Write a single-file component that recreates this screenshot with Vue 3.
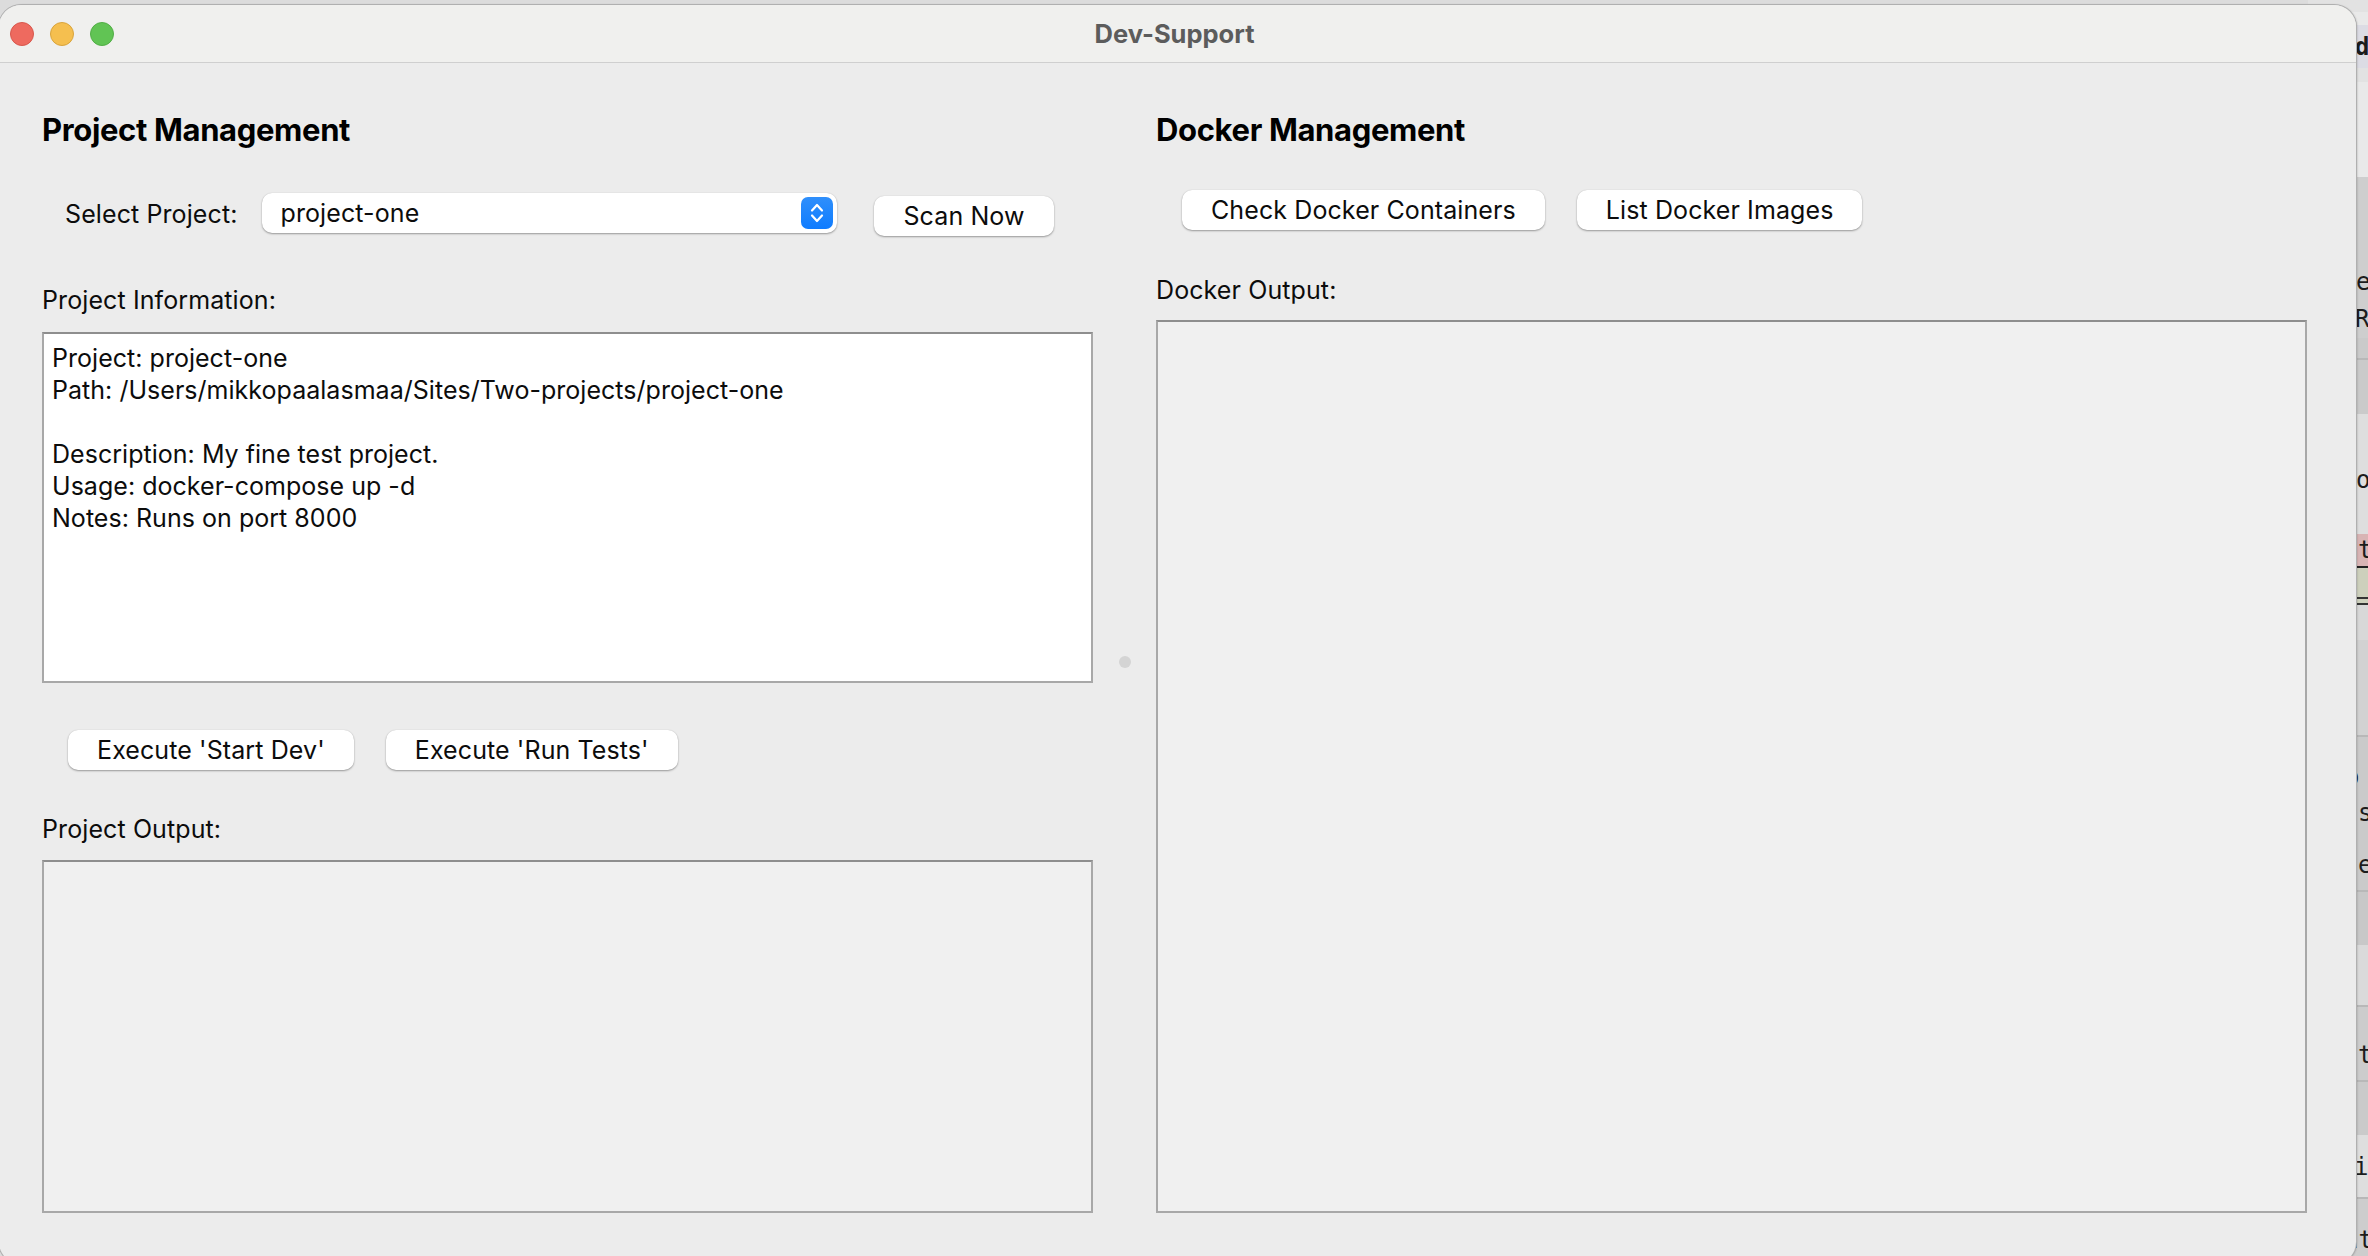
<script setup>
const projectInfo = `Project: project-one
Path: /Users/mikkopaalasmaa/Sites/Two-projects/project-one

Description: My fine test project.
Usage: docker-compose up -d
Notes: Runs on port 8000`;

// pieces of the editor window peeking out behind the app
const stripRows = [
  { h: 12, bg: "#e2e2e2" },
  { h: 13, bg: "#e9e9e9" },
  { h: 43, bg: "#dcdce4", text: "d", bold: true, pad: 47 },
  { h: 14, bg: "#e2e2e2" },
  { h: 95, bg: "#e9e9e9" },
  { h: 86, bg: "#cecece" },
  { h: 37, bg: "#cecece", text: "e" },
  { h: 38, bg: "#cecece", text: "R", pad: 47 },
  { h: 20, bg: "#cacaca" },
  { h: 2, bg: "#b8b8b8" },
  { h: 54, bg: "#cacaca" },
  { h: 48, bg: "#dedede" },
  { h: 36, bg: "#dedede", text: "o" },
  { h: 36, bg: "#dedede" },
  { h: 32, bg: "#d8b4b4", text: "t", pad: 50 },
  { h: 2, bg: "#222222" },
  { h: 29, bg: "#cdd0bc" },
  { h: 2, bg: "#333333" },
  { h: 4, bg: "#cdd0bc" },
  { h: 2, bg: "#333333" },
  { h: 35, bg: "#d8d8d8" },
  { h: 95, bg: "#d2d2d2" },
  { h: 2, bg: "#b8b8b8" },
  { h: 22, bg: "#cacaca" },
  { h: 36, bg: "#cacaca", text: "o", pad: 37 },
  { h: 36, bg: "#cacaca", text: "s", pad: 50 },
  { h: 16, bg: "#cacaca" },
  { h: 36, bg: "#cacaca", text: "e", pad: 50 },
  { h: 7, bg: "#cacaca" },
  { h: 2, bg: "#b8b8b8" },
  { h: 53, bg: "#c8c8c8" },
  { h: 60, bg: "#dadada" },
  { h: 2, bg: "#b8b8b8" },
  { h: 30, bg: "#cccccc" },
  { h: 36, bg: "#cccccc", text: "te", pad: 50 },
  { h: 7, bg: "#cccccc" },
  { h: 2, bg: "#b8b8b8" },
  { h: 53, bg: "#cacaca" },
  { h: 14, bg: "#dedede" },
  { h: 36, bg: "#dedede", text: "in", pad: 46 },
  { h: 12, bg: "#dedede" },
  { h: 2, bg: "#b8b8b8" },
  { h: 25, bg: "#cdcdcd" },
  { h: 32, bg: "#cdcdcd", text: "nt", pad: 36 },
];
</script>

<template>
  <div class="desktop">
    <div class="strip">
      <div
        v-for="(row, i) in stripRows"
        :key="i"
        class="strip-row"
        :class="{ bold: row.bold }"
        :style="{ height: row.h + 'px', background: row.bg, paddingLeft: (row.pad || 48) + 'px' }"
      >
        {{ row.text }}
      </div>
    </div>

    <div class="window">
      <div class="titlebar">
        <div class="lights">
          <span class="light red"></span>
          <span class="light yellow"></span>
          <span class="light green"></span>
        </div>
        <div class="title">Dev-Support</div>
      </div>

      <div class="content">
        <section class="left">
          <h2>Project Management</h2>

          <div class="select-row">
            <label>Select Project:</label>
            <div class="select">
              <span>project-one</span>
              <span class="stepper">
                <svg width="14" height="24" viewBox="0 0 14 24" fill="none">
                  <path d="M2 9.5 7 4l5 5.5M2 14.5 7 20l5-5.5" stroke="#fff" stroke-width="2.2" stroke-linecap="round" stroke-linejoin="round" />
                </svg>
              </span>
            </div>
            <button type="button" class="btn scan">Scan Now</button>
          </div>

          <div class="label info-label">Project Information:</div>
          <div class="textbox info">{{ projectInfo }}</div>

          <div class="btn-row exec">
            <button type="button" class="btn">Execute 'Start Dev'</button>
            <button type="button" class="btn">Execute 'Run Tests'</button>
          </div>

          <div class="label">Project Output:</div>
          <div class="textbox output project-output"></div>
        </section>

        <div class="divider"><span class="grip"></span></div>

        <section class="right">
          <h2>Docker Management</h2>

          <div class="btn-row docker">
            <button type="button" class="btn">Check Docker Containers</button>
            <button type="button" class="btn">List Docker Images</button>
          </div>

          <div class="label docker-label">Docker Output:</div>
          <div class="textbox output docker-output"></div>
        </section>
      </div>
    </div>
  </div>
</template>

<style>
html,
body {
  margin: 0;
  background: #e0e0e0;
}
</style>

<style scoped>
.desktop {
  position: relative;
  width: 2368px;
  height: 1256px;
  overflow: hidden;
  background: #dcdcdc;
  font-family: Inter, "Liberation Sans", sans-serif;
  color: #0c0c0c;
}

.strip {
  margin-left: auto;
  width: 60px;
  height: 100%;
  display: flex;
  flex-direction: column;
  overflow: hidden;
}

.strip-row {
  box-sizing: border-box;
  flex-shrink: 0;
  display: flex;
  align-items: center;
  font-family: "DejaVu Sans Mono", monospace;
  font-size: 24px;
  line-height: 32px;
  color: #1c1c1c;
  white-space: nowrap;
  overflow: hidden;
}

.strip-row.bold {
  font-weight: 700;
}

/* the app window sits on top of the desktop */
.window {
  position: absolute;
  left: -1px;
  top: 5px;
  width: 2357px;
  height: 1259px;
  display: flex;
  flex-direction: column;
  background: #ececec;
  border-radius: 22px;
  box-shadow: 0 0 0 1px #b0b0b0, 1px 0 2px rgba(0, 0, 0, 0.3);
  overflow: hidden;
}

.titlebar {
  position: relative;
  height: 58px;
  flex-shrink: 0;
  display: flex;
  align-items: center;
  justify-content: center;
  background: #f0f0ee;
  border-bottom: 1px solid #cfcfcf;
  box-sizing: border-box;
}

.lights {
  position: absolute;
  left: 11px;
  top: 17px;
  display: flex;
  gap: 16px;
}

.light {
  width: 24px;
  height: 24px;
  border-radius: 50%;
  box-sizing: border-box;
}

.red {
  background: #ee6a5f;
  border: 1px solid #d8574c;
}

.yellow {
  background: #f5bf4f;
  border: 1px solid #d9a43c;
}

.green {
  background: #61c454;
  border: 1px solid #52ae46;
}

.title {
  margin-right: 6px;
  font-size: 25.5px;
  font-weight: 700;
  color: #5c5c5c;
}

.content {
  flex: 1;
  display: flex;
  padding: 0 49px 0 43px;
  min-height: 0;
}

.left {
  width: 1051px;
  flex-shrink: 0;
  display: flex;
  flex-direction: column;
}

.right {
  flex: 1;
  min-width: 0;
  display: flex;
  flex-direction: column;
}

.divider {
  width: 63px;
  flex-shrink: 0;
  display: flex;
  justify-content: center;
  padding-top: 593px;
  box-sizing: border-box;
}

.grip {
  width: 12px;
  height: 12px;
  border-radius: 50%;
  background: #d4d4d4;
}

h2 {
  margin: 47px 0 0;
  font-size: 31px;
  line-height: 40px;
  font-weight: 700;
  letter-spacing: -0.35px;
  color: #000;
}

.select-row {
  display: flex;
  align-items: center;
  height: 40px;
  margin-top: 43px;
  padding-left: 23px;
}

label,
.label {
  font-size: 25px;
  line-height: 32px;
  letter-spacing: 0.1px;
}

label {
  position: relative;
  top: 1px;
}

.select {
  margin-left: 25px;
  width: 575px;
  height: 40px;
  box-sizing: border-box;
  padding: 0 4px 0 18px;
  display: flex;
  align-items: center;
  justify-content: space-between;
  background: #fff;
  border-radius: 10px;
  font-size: 25px;
  letter-spacing: 0.1px;
  box-shadow: 0 1px 2px rgba(0, 0, 0, 0.35), 0 0 1px rgba(0, 0, 0, 0.15);
}

.stepper {
  width: 32px;
  height: 32px;
  border-radius: 7px;
  display: flex;
  align-items: center;
  justify-content: center;
  background: linear-gradient(#2f8ffb, #0f7cff);
}

.btn {
  height: 40px;
  padding: 0 29px;
  border: none;
  border-radius: 10px;
  background: #fff;
  font-family: inherit;
  font-size: 25px;
  letter-spacing: 0.1px;
  color: #0c0c0c;
  box-shadow: 0 1px 2px rgba(0, 0, 0, 0.35), 0 0 1px rgba(0, 0, 0, 0.15);
}

.scan {
  margin-left: 37px;
  position: relative;
  top: 3px;
}

.info-label {
  margin-top: 51px;
}

.textbox {
  box-sizing: border-box;
  border: 2px solid #a8a8a8;
  border-top-color: #8e8e8e;
  white-space: pre-wrap;
}

.info {
  height: 351px;
  margin-top: 16px;
  padding: 8px 8px;
  background: #fff;
  font-size: 25px;
  line-height: 32px;
  letter-spacing: 0.03px;
}

.output {
  background: #f0f0f0;
}

.project-output {
  height: 353px;
  margin-top: 15px;
}

.btn-row {
  display: flex;
}

.exec {
  gap: 32px;
  margin: 47px 0 43px;
  padding-left: 26px;
}

.docker {
  gap: 32px;
  margin-top: 40px;
  padding-left: 26px;
}

.docker-label {
  margin-top: 44px;
}

.docker-output {
  height: 893px;
  margin-top: 14px;
}
</style>
